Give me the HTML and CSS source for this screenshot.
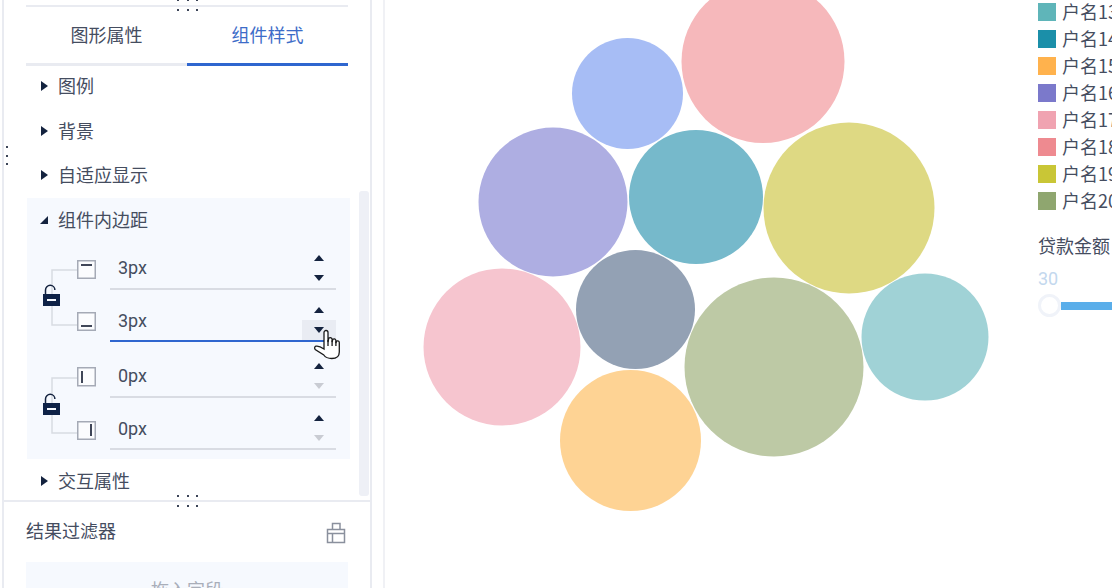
FILE: index.html
```html
<!DOCTYPE html>
<html lang="zh">
<head>
<meta charset="utf-8">
<title>组件样式</title>
<link rel="stylesheet" href="styles.css">
</head>
<body>
<div class="page">
  <aside class="sidebar">
    <div class="dots dots-h dots-top-a"><i></i><i></i><i></i></div>
    <div class="dots dots-h dots-top-b"><i></i><i></i><i></i></div>
    <div class="dots dots-v"><i></i><i></i><i></i></div>

    <section class="upper">
      <div class="tabs">
        <div class="tab">图形属性</div>
        <div class="tab active">组件样式</div>
      </div>
      <div class="scroll-body">
        <div class="list">
          <div class="row"><span class="tri-right"></span>图例</div>
          <div class="row"><span class="tri-right"></span>背景</div>
          <div class="row"><span class="tri-right"></span>自适应显示</div>
          <div class="panel">
            <div class="panel-head"><span class="tri-open"></span>组件内边距</div>

            <div class="group">
              <svg class="tree" width="70" height="100" viewBox="0 0 70 100">
                <path class="tree-line" d="M12 52V28H37M12 64V83H37"/>
                <rect class="box" x="37.75" y="18.75" width="17.5" height="17.5"/>
                <rect class="mark" x="41" y="22" width="11" height="2"/>
                <rect class="box" x="37.75" y="70.75" width="17.5" height="17.5"/>
                <rect class="mark" x="41" y="83" width="11" height="2"/>
                <path class="shackle" d="M5.5 52V48a4.7 4.7 0 0 1 9.4 0"/>
                <rect class="lock" x="3" y="52" width="17" height="12"/>
                <rect class="lock-dash" x="7" y="57" width="9" height="2"/>
              </svg>
              <div class="fields">
                <div class="field">
                  <span class="value">3px</span>
                  <div class="spin"><b class="btn"><span class="up"></span></b><b class="btn"><span class="down"></span></b></div>
                </div>
                <div class="field focus">
                  <span class="value">3px</span>
                  <div class="spin"><b class="btn"><span class="up"></span></b><b class="btn hover"><span class="down"></span></b></div>
                </div>
              </div>
            </div>

            <div class="group second">
              <svg class="tree" width="70" height="100" viewBox="0 0 70 100">
                <path class="tree-line" d="M12 53V28H37M12 65V83H37"/>
                <rect class="box" x="37.75" y="17.75" width="17.5" height="18"/>
                <rect class="mark" x="41" y="21" width="2" height="12"/>
                <rect class="box" x="37.75" y="71.75" width="17.5" height="17.5"/>
                <rect class="mark" x="50" y="74" width="2" height="12"/>
                <path class="shackle" d="M5.5 53V49a4.7 4.7 0 0 1 9.4 0"/>
                <rect class="lock" x="3" y="53" width="17" height="12"/>
                <rect class="lock-dash" x="7" y="58" width="9" height="2"/>
              </svg>
              <div class="fields">
                <div class="field">
                  <span class="value">0px</span>
                  <div class="spin"><b class="btn"><span class="up"></span></b><b class="btn"><span class="down off"></span></b></div>
                </div>
                <div class="field">
                  <span class="value">0px</span>
                  <div class="spin"><b class="btn"><span class="up"></span></b><b class="btn"><span class="down off"></span></b></div>
                </div>
              </div>
            </div>
          </div>
          <div class="row after-panel"><span class="tri-right"></span>交互属性</div>
        </div>
        <div class="scrollbar"></div>
      </div>
    </section>

    <section class="lower">
      <div class="dots dots-h dots-low-a"><i></i><i></i><i></i></div>
      <div class="dots dots-h dots-low-b"><i></i><i></i><i></i></div>
      <div class="lower-head">
        <span>结果过滤器</span>
        <svg width="20" height="22" viewBox="0 0 20 22" class="filter-icon">
          <path d="M1.5 7.5H18.5V20.5H1.5ZM6.5 7.5V1.5H14V7.5M1.5 11.5H18.5M6.5 11.5V20.5"/>
        </svg>
      </div>
      <div class="drop">拖入字段</div>
    </section>
  </aside>

  <main class="canvas">
    <svg class="bubbles" width="728" height="588" viewBox="385 0 728 588">
      <circle cx="763" cy="61.5" r="81.5" fill="#f6b8bb"/>
      <circle cx="627.5" cy="93.5" r="55.5" fill="#a7bdf5"/>
      <circle cx="553" cy="202" r="74.500" fill="#aeaee2"/>
      <circle cx="696" cy="197" r="67" fill="#76b9cb"/>
      <circle cx="849" cy="208" r="85.5" fill="#ded983"/>
      <circle cx="502" cy="347" r="78.5" fill="#f6c5cf"/>
      <circle cx="635.5" cy="309.5" r="59.5" fill="#93a1b4"/>
      <circle cx="774" cy="367" r="89.5" fill="#bdc9a5"/>
      <circle cx="925" cy="337" r="63.5" fill="#a0d2d6"/>
      <circle cx="630.5" cy="440.5" r="70.5" fill="#fed394"/>
    </svg>
    <div class="legend">
      <div class="legend-item"><i class="sw c13"></i>户名13</div>
      <div class="legend-item"><i class="sw c14"></i>户名14</div>
      <div class="legend-item"><i class="sw c15"></i>户名15</div>
      <div class="legend-item"><i class="sw c16"></i>户名16</div>
      <div class="legend-item"><i class="sw c17"></i>户名17</div>
      <div class="legend-item"><i class="sw c18"></i>户名18</div>
      <div class="legend-item"><i class="sw c19"></i>户名19</div>
      <div class="legend-item"><i class="sw c20"></i>户名20</div>
      <div class="range-title">贷款金额</div>
      <div class="range-value">30</div>
      <div class="slider"><span class="knob"></span><span class="bar"></span></div>
    </div>
  </main>

  <svg class="cursor" width="28" height="32" viewBox="0 0 28 32">
    <path d="M10 20V3.5a2 2 0 0 1 4 0V13l.5-2.5a1.8 1.8 0 0 1 3.6 0V13l.4-1.5a1.7 1.7 0 0 1 3.4.3V14l.3-1a1.6 1.6 0 0 1 3.1.5V23c0 4.5-3 6.5-7.5 6.5-4 0-6-.5-8-3.5L1.2 20.5c-1-1.5-.5-3 .8-3.3 1.8-.4 4.500.4 8 2.800Z"/>
    <path d="M14 11V17M18.100 11.500V17M21.900 12.500V17"/>
  </svg>
</div>
</body>
</html>
```

FILE: styles.css
```css
* { box-sizing: border-box; }
html, body { margin: 0; padding: 0; height: 100%; background: #fff; overflow: hidden; }
body { font-family: "Noto Sans CJK SC", "Noto Sans", sans-serif; font-size: 18px; font-weight: 400; color: #454d5f; }

.page { position: relative; display: flex; width: 1112px; height: 588px; overflow: hidden; }

.sidebar {
  position: relative; flex: none; width: 370px; height: 588px; margin-left: 2px;
  border-left: 2px solid #e9ebf1; border-right: 2px solid #e9ebf1;
  display: flex; flex-direction: column;
}

.dots { position: absolute; display: flex; }
.dots i { display: block; width: 2px; height: 2px; background: #3c4558; }
.dots-h { gap: 7.5px; left: 173px; }
.dots-v { flex-direction: column; gap: 6.5px; left: 2px; top: 146px; }
.dots-top-a { top: -1px; }
.dots-top-b { top: 9px; }
.dots-low-a { top: -7px; }
.dots-low-b { top: 3px; }

.upper { flex: none; height: 500px; overflow: hidden; padding-top: 5px; }

.tabs { display: flex; width: 322px; margin-left: 22px; border-top: 2px solid #e9ebf1; }
.tab {
  flex: 1; height: 59px; padding-top: 12px; text-align: center; line-height: 30px;
  border-bottom: 3px solid #e9ebf1;
}
.tab.active { color: #3d6cc8; border-bottom-color: #2f66cf; }

.scroll-body { display: flex; align-items: flex-start; }
.list { width: 324px; margin-left: 22px; flex: none; }
.scrollbar { flex: none; width: 10px; height: 305px; margin: 125px 0 0 9px; background: #eef0f6; border-radius: 3px; }

.row { display: flex; align-items: center; height: 40px; margin-bottom: 4.5px; padding: 0 0 2px 15px; white-space: nowrap; }
.after-panel { margin: 2px 0 0; }
.tri-right { width: 0; height: 0; margin: 2px 10px 0 0; border-left: 7px solid #14233f; border-top: 5px solid transparent; border-bottom: 5px solid transparent; }
.tri-open { width: 0; height: 0; margin: 2px 10px 0 0; border-right: 8px solid #14233f; border-top: 8px solid transparent; }

.panel { margin: -2px 0 0 1px; width: 323px; padding: 0 0 9px; background: #f6f9fe; }
.panel-head { display: flex; align-items: center; height: 44px; padding: 0 0 2px 13px; }

.group { display: flex; align-items: flex-start; }
.group.second { margin-top: 8px; }
.tree { flex: none; margin-left: 13px; display: block; }
.tree-line { fill: none; stroke: #d8dbe2; stroke-width: 1.5; }
.box { fill: #fbfcfe; stroke: #a5aab6; stroke-width: 1.5; }
.mark { fill: #3f4658; }
.shackle { fill: none; stroke: #14233f; stroke-width: 1.5; }
.lock { fill: #0e2247; }
.lock-dash { fill: #f6f9fe; }

.fields { width: 226px; flex: none; display: flex; flex-direction: column; gap: 4px; }
.field { display: flex; height: 48px; justify-content: space-between; border-bottom: 2px solid #d9dce3; }
.field.focus { border-bottom-color: #2f66cf; }
.field + .field .value { padding-top: 10px; }
.value { font-family: Roboto, sans-serif; font-weight: 400; padding: 9px 0 0 8px; line-height: 34px; font-size: 18px; }

.spin { display: flex; flex-direction: column; justify-content: flex-end; width: 34px; }
.btn { display: flex; align-items: center; justify-content: center; height: 20px; }
.btn.hover { background: #e9ecf3; }
.up { width: 0; height: 0; border-bottom: 6px solid #14233f; border-left: 5px solid transparent; border-right: 5px solid transparent; }
.down { width: 0; height: 0; border-top: 6px solid #14233f; border-left: 5px solid transparent; border-right: 5px solid transparent; }
.down.off { border-top-color: #c9ccd3; }

.lower { position: relative; flex: 1; border-top: 2px solid #e9ebf1; min-height: 0; }
.lower-head { display: flex; align-items: center; justify-content: space-between; height: 60px; padding: 0 24px 5px 22px; }
.filter-icon { display: block; fill: none; stroke: #8a909d; stroke-width: 1.5; margin-top: 6px; }
.drop { width: 322px; height: 60px; margin-left: 22px; padding-top: 12px; background: #f6f9fe; color: #a9aeb9; text-align: center; line-height: 30px; }

.canvas { position: relative; flex: 1; margin-left: 11px; border-left: 2px solid #f0f1f5; overflow: hidden; }
.bubbles { position: absolute; left: 0; top: 0; display: block; }

.legend { position: absolute; left: 653px; top: 0; width: 200px; }
.legend-item { display: flex; align-items: center; height: 27px; white-space: nowrap; line-height: 27px; }
.legend-item:first-child { margin-top: -2px; }
.sw { display: block; width: 18px; height: 18px; margin-right: 6px; }
.c13 { background: #5fb5b9; }
.c14 { background: #1b8fa9; }
.c15 { background: #ffb24d; }
.c16 { background: #7b79cb; }
.c17 { background: #f0a3b1; }
.c18 { background: #ee8a90; }
.c19 { background: #c9c636; }
.c20 { background: #8fa66f; }

.range-title { margin-top: 16px; line-height: 30px; }
.range-value { margin-top: 6px; line-height: 26px; color: #c3d8ee; font-family: Roboto, sans-serif; }
.slider { display: flex; align-items: center; margin-top: 2px; }
.knob { flex: none; width: 23px; height: 23px; border-radius: 50%; background: #fff; border: 3px solid #f0f3f9; }
.bar { flex: none; width: 100px; height: 8px; background: #5aaeea; }

.cursor { position: absolute; left: 314px; top: 329px; }
.cursor path { fill: #fff; stroke: #1a1a1a; stroke-width: 1.3; }
```
